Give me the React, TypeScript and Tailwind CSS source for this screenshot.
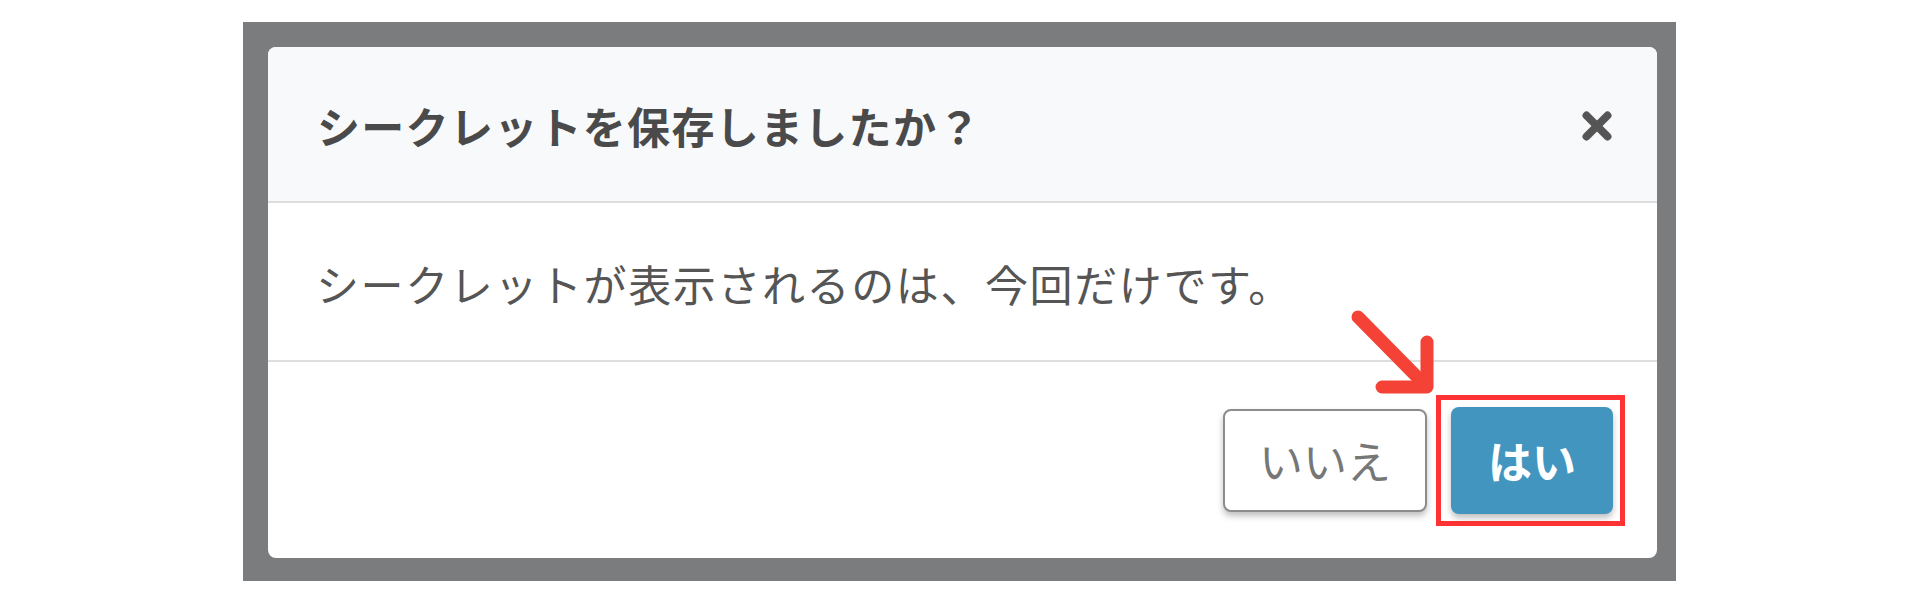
import { X } from "lucide-react";

const jp = { fontFamily: '"Noto Sans CJK JP", "Noto Sans", sans-serif' };

function Arrow() {
  return (
    <svg
      className="absolute left-[1072px] top-[253px] pointer-events-none"
      width="100"
      height="100"
      viewBox="0 0 100 100"
      fill="none"
      stroke="#f44336"
      strokeWidth="13"
      strokeLinecap="round"
      strokeLinejoin="round"
    >
      <line x1="18" y1="17" x2="86" y2="86" />
      <polyline points="42,87 87,87 87,42" />
    </svg>
  );
}

export default function App() {
  return (
    <div className="w-[1920px] h-[606px] bg-white" style={jp}>
      <div className="ml-[243px] pt-[22px]">
        <div className="w-[1433px] h-[559px] bg-[#7b7c7e] pt-[25px] pl-[25px] pr-[19px] pb-[23px]">
          <div className="relative h-full bg-white rounded-[8px] flex flex-col overflow-hidden">
            <div className="h-[156px] shrink-0 bg-[#f8f9fb] border-b-2 border-[#dedede] flex items-center justify-between pl-[49px] pr-[39px] pt-[3px]">
              <h2 className="text-[43px] font-bold text-[#4a4a4a] leading-none tracking-[1.3px]">
                シークレットを保存しましたか？
              </h2>
              <X className="w-[42px] h-[42px] text-[#555]" strokeWidth={4.5} />
            </div>

            <div className="h-[159px] shrink-0 border-b-2 border-[#dedede] flex items-center pl-[48px] pt-[3px]">
              <p className="text-[43px] text-[#555] leading-none tracking-[1.6px]">
                シークレットが表示されるのは、今回だけです。
              </p>
            </div>

            <div className="flex-1 flex items-center justify-end gap-[9px] pr-[32px]">
              <button className="w-[204px] h-[103px] bg-white border-2 border-[#8c8c8c] rounded-[8px] shadow-[0_4px_6px_rgba(0,0,0,0.25)] text-[44px] text-[#777] leading-none">
                いいえ
              </button>
              <div className="border-[5px] border-[#ff3333] pt-[7px] pb-[7px] pl-[10px] pr-[7px]">
                <button className="w-[162px] h-[107px] bg-[#4295bf] rounded-[8px] shadow-[0_4px_6px_rgba(0,0,0,0.25)] text-[44px] font-bold text-white leading-none">
                  はい
                </button>
              </div>
            </div>

            <Arrow />
          </div>
        </div>
      </div>
    </div>
  );
}
